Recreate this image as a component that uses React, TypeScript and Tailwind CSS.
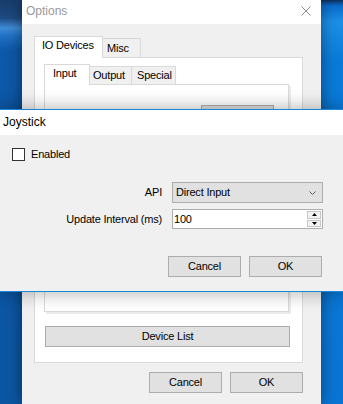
const Button = ({ label, className = "" }: { label: string; className?: string }) => (
  <div
    className={`flex h-[21px] w-[73px] items-center justify-center border border-[#adadad] bg-[#e1e1e1] ${className}`}
  >
    {label}
  </div>
);

const OptionsWindow = () => (
  <div className="relative z-10 flex w-[299px] shrink-0 flex-col bg-[#f0f0f0] shadow-[0_0_14px_rgba(0,0,0,0.45)]">
    <div className="flex h-[24px] items-start justify-between bg-white pl-[4px] pr-[10px]">
      <span className="pt-[4px] text-[12px] leading-[14px] tracking-normal text-[#999999]">Options</span>
      <svg className="mt-[6px]" width="10" height="10" viewBox="0 0 10 10">
        <path d="M0.5 0.5L9.5 9.5M9.5 0.5L0.5 9.5" stroke="#8c8c8c" strokeWidth="1" />
      </svg>
    </div>

    <div className="pl-[12px] pt-[12px]">
      {/* outer tabs */}
      <div className="flex h-[21px] items-end">
        <div className="relative z-10 -mb-px h-[22px] w-[69px] border border-b-0 border-[#d9d9d9] bg-white pl-[7px] pt-[2px]">
          IO Devices
        </div>
        <div className="h-[19px] w-[38px] border-r border-t border-[#d9d9d9] bg-[#f0f0f0] pl-[4px] pt-[3px]">
          Misc
        </div>
      </div>

      <div className="flex h-[306px] w-[269px] flex-col border border-[#d9d9d9] bg-white pl-[9px] pt-[6px]">
        {/* inner tabs */}
        <div className="flex h-[20px] items-end">
          <div className="relative z-10 -mb-px h-[21px] w-[46px] border border-b-0 border-[#d9d9d9] bg-white pl-[8px] pt-[2px]">
            Input
          </div>
          <div className="h-[18px] w-[42px] border-r border-t border-[#d9d9d9] bg-[#f0f0f0] pl-[3px] pt-[2px]">
            Output
          </div>
          <div className="h-[18px] w-[44px] border-r border-t border-[#d9d9d9] bg-[#f0f0f0] pl-[5px] pt-[2px]">
            Special
          </div>
        </div>
        <div className="flex h-[228px] w-[245px] justify-end border border-[#d9d9d9] bg-white shadow-[2px_2px_0_#ebebeb]">
          <div className="mr-[14px] mt-[20px] h-[23px] w-[73px] border border-[#adadad] bg-[#e1e1e1]" />
        </div>

        <div className="ml-[1px] mt-[14px] flex h-[21px] w-[245px] items-center justify-center border border-[#adadad] bg-[#e1e1e1]">
          Device List
        </div>
      </div>

      <div className="mt-[9px] flex justify-end gap-[8px] pr-[18px]">
        <Button label="Cancel" />
        <Button label="OK" />
      </div>
    </div>
  </div>
);

const JoystickWindow = () => (
  <div className="absolute left-0 right-0 top-[109px] z-20 flex h-[183px] flex-col border-y border-[#1c86d9] bg-[#f0f0f0] shadow-[0_0_16px_2px_rgba(0,0,0,0.28)]">
    <div className="h-[25px] bg-white pl-[3px] pt-[5px] text-[12px] leading-[14px] tracking-normal">Joystick</div>

    <div className="flex-1 pl-[12px] pt-[13px]">
      <div className="flex h-[13px] items-center gap-[6px]">
        <div className="h-[13px] w-[13px] border border-[#333333] bg-white" />
        <span>Enabled</span>
      </div>

      <div className="mt-[21px] grid grid-cols-[150px_151px] items-center gap-x-[10px] gap-y-[6px]">
        <span className="text-right">API</span>
        <div className="flex h-[21px] items-center justify-between border border-[#adadad] bg-[#e1e1e1] pl-[3px] pr-[6px]">
          <span>Direct Input</span>
          <svg width="7" height="4" viewBox="0 0 7 4">
            <path d="M0.5 0.5L3.5 3.5L6.5 0.5" fill="none" stroke="#5a5a5a" strokeWidth="1" />
          </svg>
        </div>

        <span className="text-right">Update Interval (ms)</span>
        <div className="flex h-[20px] items-stretch justify-between border border-[#adadad] bg-white pl-[1px]">
          <span className="self-center">100</span>
          <div className="flex w-[15px] flex-col gap-px py-px pr-px">
            <div className="flex flex-1 items-center justify-center border border-[#c6c6c6] bg-[#f2f2f2]">
              <svg width="5" height="3" viewBox="0 0 5 3">
                <path d="M0 3L2.5 0L5 3Z" fill="#000" />
              </svg>
            </div>
            <div className="flex flex-1 items-center justify-center border border-[#c6c6c6] bg-[#f2f2f2]">
              <svg width="5" height="3" viewBox="0 0 5 3">
                <path d="M0 0L2.5 3L5 0Z" fill="#000" />
              </svg>
            </div>
          </div>
        </div>
      </div>

      <div className="mt-[27px] flex justify-end gap-[8px] pr-[21px]">
        <Button label="Cancel" />
        <Button label="OK" />
      </div>
    </div>
  </div>
);

export default function App() {
  return (
    <div className="relative flex h-[404px] w-[343px] overflow-hidden font-['Liberation_Sans',Arial,sans-serif] text-[11px] leading-[13px] tracking-[-0.2px] text-black">
      <div className="w-[22px] shrink-0 bg-[linear-gradient(180deg,#173d6c_0px,#1d4a80_18px,#3f8ad8_28px,#2070c4_36px,#0d58a8_50px,#0b55a2_100%)]" />
      <OptionsWindow />
      <div className="w-[22px] shrink-0 bg-[linear-gradient(180deg,#0e2f57_0px,#0a6ccc_6px,#1d8fe6_22px,#0a7ad8_60px,#0a74d4_100%)]" />
      <JoystickWindow />
    </div>
  );
}
